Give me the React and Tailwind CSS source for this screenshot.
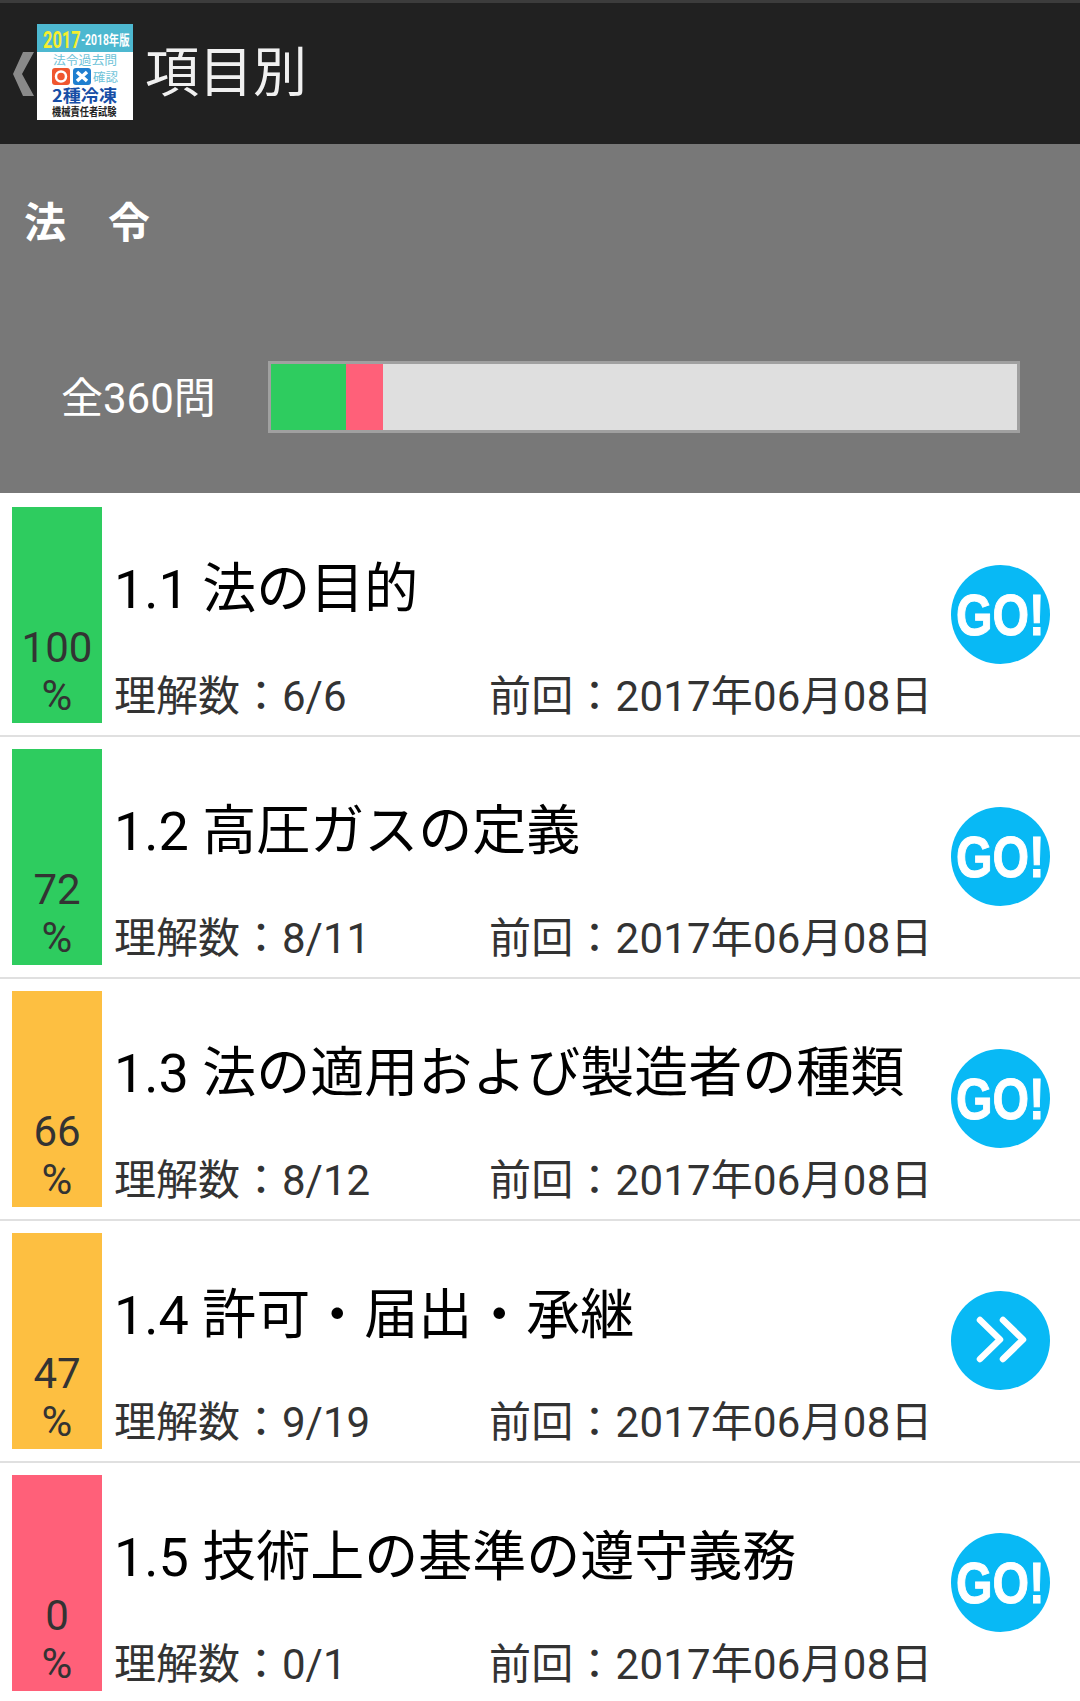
const FONT = "font-['Roboto','Noto_Sans_CJK_JP',sans-serif]"

const ROWS = [
  { title: '1.1 法の目的', pct: 100, color: 'bg-[#2ecc5f]', count: '6/6' },
  { title: '1.2 高圧ガスの定義', pct: 72, color: 'bg-[#2ecc5f]', count: '8/11' },
  { title: '1.3 法の適用および製造者の種類', pct: 66, color: 'bg-[#fdbf41]', count: '8/12' },
  { title: '1.4 許可・届出・承継', pct: 47, color: 'bg-[#fdbf41]', count: '9/19', resume: true },
  { title: '1.5 技術上の基準の遵守義務', pct: 0, color: 'bg-[#ff6079]', count: '0/1' },
]

function Logo() {
  return (
    <svg width="96" height="96" viewBox="0 0 96 96" className="shrink-0">
      <rect width="96" height="96" fill="#fff" />
      <rect width="96" height="28" fill="#4db8d0" />
      <text transform="translate(6 24) scale(.685 1)" fontSize="24" fontWeight="700" fill="#f5ee2e" fontFamily="Roboto">2017</text>
      <text transform="translate(44 21) scale(.74 1)" fontSize="14" fontWeight="700" fill="#fff" fontFamily="Roboto, 'Noto Sans CJK JP'">-2018年版</text>
      <text x="16" y="41" fontSize="12" fill="#6fc3d8" textLength="64" lengthAdjust="spacingAndGlyphs" fontFamily="'Noto Sans CJK JP'">法令過去問</text>
      <rect x="15" y="44" width="18" height="17" rx="3" fill="#f0562f" />
      <circle cx="24" cy="52.500" r="5" fill="#f0562f" stroke="#fff" strokeWidth="2.5" />
      <rect x="36" y="44" width="18" height="17" rx="3" fill="#1f7fd0" />
      <path d="M40 48l10 9M50 48l-10 9" stroke="#fff" strokeWidth="3.5" />
      <text x="56" y="58" fontSize="12" fill="#6fc3d8" textLength="25" lengthAdjust="spacingAndGlyphs" fontFamily="'Noto Sans CJK JP'">確認</text>
      <text x="15" y="78" fontSize="17" fontWeight="700" fill="#174ea6" textLength="65" lengthAdjust="spacingAndGlyphs" fontFamily="'Noto Sans CJK JP'">2種冷凍</text>
      <text transform="translate(15 92) scale(.84 1)" fontSize="11" fontWeight="700" fill="#222" fontFamily="'Noto Sans CJK JP'">機械責任者試験</text>
    </svg>
  )
}

function GoButton({ resume }) {
  return (
    <svg width="99" height="99" viewBox="0 0 99 99" className="shrink-0 -mt-[2px]">
      <circle cx="49.5" cy="49.5" r="49.5" fill="#08b9f5" />
      {resume ? (
        <g fill="none" stroke="#fff" strokeWidth="6.5" strokeLinecap="round" strokeLinejoin="round">
          <path d="M29 29l20 19.500-20 19.500" />
          <path d="M52 29l20 19.500-20 19.500" />
        </g>
      ) : (
        <text transform="translate(5 70) scale(.81 1)" fontSize="58" fontWeight="700" fill="#fff" stroke="#fff" strokeWidth="1" fontFamily="'Liberation Sans', sans-serif">GO!</text>
      )}
    </svg>
  )
}

function Row({ row }) {
  return (
    <div className="flex items-center pl-3 pr-[30px] py-3 border-b-2 border-[#e0e0e0]">
      <div className={`w-[90px] h-[216px] shrink-0 flex flex-col justify-end items-center pb-[8px] text-[42px] text-[#333] ${row.color}`}>
        <span className="leading-[58px]">{row.pct}</span>
        <span className="leading-[38px]">%</span>
      </div>
      <div className="flex-1 min-w-0 h-[216px] flex flex-col pl-[12px] pb-[1px]">
        <div className="mt-[50px] text-[54px] leading-[66px] text-black whitespace-nowrap">{row.title}</div>
        <div className="mt-auto flex text-[42px] leading-[50px] text-[#333] whitespace-nowrap">
          <span className="w-[375px]">理解数：{row.count}</span>
          <span className="tracking-[0.2px]">前回：2017年06月08日</span>
        </div>
      </div>
      <GoButton resume={row.resume} />
    </div>
  )
}

export default function App() {
  return (
    <div className={`w-[1080px] h-[1701px] overflow-hidden bg-white ${FONT}`}>
      <header className="h-[144px] bg-[#212121] border-t-[3px] border-[#3c3c3c] flex items-center pl-[13px]">
        <svg width="22" height="44" viewBox="0 0 22 44" className="shrink-0">
          <path d="M10 0h11L9 22l12 22H10L0 22z" fill="#8a8a8a" />
        </svg>
        <div className="ml-[2px] -mt-[4px]"><Logo /></div>
        <h1 className="ml-[12px] text-[54px] leading-none text-[#f0f0f0] font-normal">項目別</h1>
      </header>

      <section className="h-[349px] bg-[#787878] flex flex-col pl-[24px] pr-[26px] text-white">
        <div className="mt-[50px] text-[42px] leading-[60px] font-bold">法　令</div>
        <div className="mt-auto mb-[60px] flex items-center">
          <span className="ml-[37px] w-[207px] pt-[4px] text-[42px] leading-[68px]">全360問</span>
          <div className="w-[752px] h-[72px] border-[3px] border-[#a0a0a0] bg-[#dfdfdf] flex">
            <div className="w-[75px] bg-[#2ecc5f]" />
            <div className="w-[37px] bg-[#ff6079]" />
          </div>
        </div>
      </section>

      <div className="pt-[2px]">
        {ROWS.map(r => <Row key={r.title} row={r} />)}
      </div>
    </div>
  )
}
